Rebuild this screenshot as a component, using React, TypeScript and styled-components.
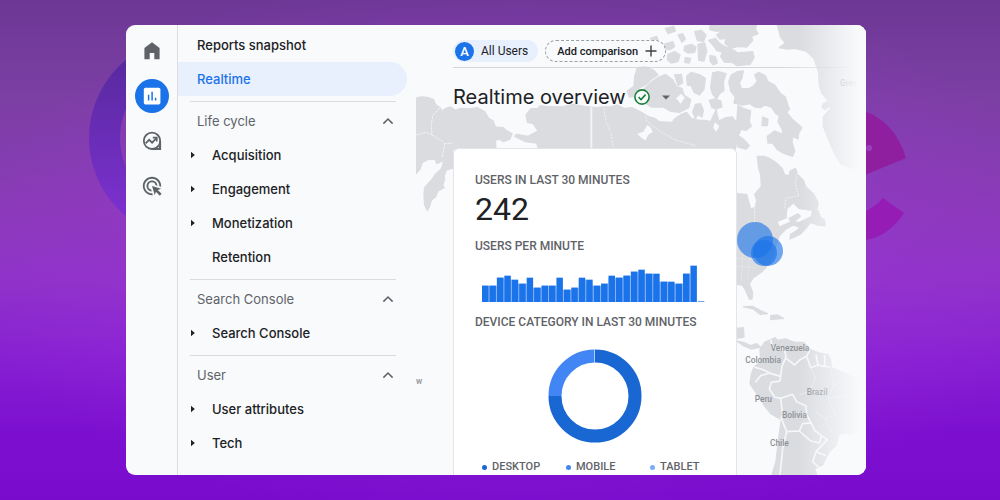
import React from "react";
import styled, { createGlobalStyle } from "styled-components";
import { MdAdsClick } from "react-icons/md";

const GlobalStyle = createGlobalStyle`
  *, *::before, *::after { box-sizing: border-box; }
  body { margin: 0; font-family: Inter, "Liberation Sans", sans-serif; color: #202124; }
  button { font: inherit; color: inherit; border: 0; background: none; padding: 0; margin: 0; cursor: pointer; }
  h1, h2, p, ul { margin: 0; padding: 0; font-weight: 400; }
  ul { list-style: none; }
  a { color: inherit; text-decoration: none; }
`;

const Stage = styled.div`
  position: relative;
  height: 100vh;
  display: flex;
  padding: 25px 13.4% 25px 12.6%;
  overflow: hidden;
  background:
    radial-gradient(ellipse 56% 56% at 52% 50%, rgba(165, 55, 225, 0.6), rgba(165, 55, 225, 0) 100%),
    linear-gradient(180deg, #6d3895 0%, #7c3fa4 20%, #8a3ab8 42%, #8f32c8 56%, #8822d2 70%, #7c10d0 86%, #790bcd 100%);
`;

const Backdrop = styled.svg`
  position: absolute;
  inset: 0;
  width: 100%;
  height: 100%;
`;

const Window = styled.div`
  position: relative;
  display: flex;
  flex: 1;
  min-width: 0;
  border-radius: 9px;
  overflow: hidden;
  background: #f8fafc;
`;

const Rail = styled.nav`
  flex: none;
  width: 52px;
  display: flex;
  flex-direction: column;
  align-items: center;
  gap: 11px;
  padding-top: 9px;
  border-right: 1px solid #dcdee1;
`;

const RailButton = styled.button<{ $active?: boolean }>`
  display: grid;
  place-items: center;
  width: 34px;
  height: 34px;
  border-radius: 50%;
  color: ${(p) => (p.$active ? "#fff" : "#5f6368")};
  background: ${(p) => (p.$active ? "#1a73e8" : "transparent")};
`;

const Nav = styled.nav`
  flex: none;
  width: 238px;
  padding-top: 3px;
`;

const NavLink = styled.a<{ $active?: boolean }>`
  display: flex;
  align-items: center;
  height: 34px;
  margin-right: 9px;
  padding-left: 19px;
  font-size: 13px;
  font-weight: 500;
  border-radius: 0 17px 17px 0;
  color: ${(p) => (p.$active ? "#1a73e8" : "#202124")};
  background: ${(p) => (p.$active ? "#e8f0fe" : "transparent")};
`;

const NavSection = styled.section`
  &::before {
    content: "";
    display: block;
    height: 1px;
    margin: 5px 20px 2px 12px;
    background: #dadce0;
  }
`;

const SectionButton = styled.button`
  display: flex;
  align-items: center;
  justify-content: space-between;
  width: 100%;
  height: 34px;
  padding: 0 22px 0 19px;
  font-size: 13px;
  color: #5f6368;
`;

const ItemButton = styled.button`
  display: grid;
  grid-template-columns: 21px auto;
  align-items: center;
  justify-content: start;
  width: 100%;
  height: 34px;
  padding-left: 13px;
  font-size: 13px;
  font-weight: 500;
  text-align: left;
`;

const ItemLabel = styled.span`
  grid-column: 2;
`;

const Main = styled.main`
  position: relative;
  flex: 1;
  min-width: 0;
  display: flex;
  flex-direction: column;
  padding: 15px 0 0 37px;
  overflow: hidden;
`;

const Map = styled.svg`
  position: absolute;
  inset: 0;
  width: 100%;
  height: 100%;
`;

const Header = styled.header`
  position: relative;
  display: flex;
  align-items: center;
  gap: 7px;
  padding-bottom: 5px;
  border-bottom: 1px solid;
  border-image: linear-gradient(90deg, #d5d7da 80%, #d5d7da00 97%) 1;
`;

const Chip = styled.button<{ $dashed?: boolean }>`
  display: flex;
  align-items: center;
  gap: 7px;
  height: 22px;
  padding: ${(p) => (p.$dashed ? "0 8px 0 11px" : "0 10px 0 2px")};
  border: ${(p) => (p.$dashed ? "1px dashed #9aa0a6" : "0")};
  border-radius: 11px;
  background: ${(p) => (p.$dashed ? "#f8fafc" : "#e8f0fe")};
  font-family: Roboto, "Liberation Sans", sans-serif;
  font-size: ${(p) => (p.$dashed ? "11px" : "12px")};
  font-weight: ${(p) => (p.$dashed ? 500 : 400)};
`;

const Avatar = styled.span`
  display: grid;
  place-items: center;
  width: 19px;
  height: 19px;
  border-radius: 50%;
  background: #1a73e8;
  color: #fff;
  font-size: 13px;
  font-weight: 500;
`;

const TitleRow = styled.div`
  position: relative;
  display: flex;
  align-items: center;
  gap: 8px;
  height: 58px;
  margin-bottom: 22px;
`;

const Title = styled.h1`
  font-size: 20px;
  line-height: 24px;
`;

const StatusButton = styled.button`
  display: flex;
  align-items: center;
  gap: 12px;
`;

const Card = styled.section`
  position: relative;
  flex: 1 0 auto;
  width: 284px;
  padding: 23px 22px 0 21px;
  border: 1px solid #e3e5e8;
  border-bottom: 0;
  border-radius: 6px 6px 0 0;
  background: #fff;
  font-family: Roboto, "Liberation Sans", sans-serif;
`;

const Label = styled.h2`
  font-size: 12px;
  line-height: 16px;
  font-weight: 500;
  white-space: nowrap;
  color: #5f6368;
`;

const BigNumber = styled.p`
  font-size: 32px;
  line-height: 42px;
  margin-bottom: 8px;
`;

const Bars = styled.svg`
  display: block;
  margin: 11px 0 12px 7px;
`;

const Donut = styled.svg`
  display: block;
  margin: 19px auto 16px;
`;

const Legend = styled.ul`
  display: grid;
  grid-template-columns: repeat(3, 84px);
  padding-left: 7px;
`;

const LegendItem = styled.li<{ $color: string }>`
  display: flex;
  align-items: center;
  gap: 5px;
  font-size: 11px;
  line-height: 16px;
  font-weight: 500;
  color: #5f6368;
  &::before {
    content: "";
    width: 5px;
    height: 5px;
    border-radius: 50%;
    background: ${(p) => p.$color};
  }
`;

const HomeIcon = () => (
  <svg width="16" height="18" viewBox="0 0 16 18" aria-hidden="true">
    <path d="M8 0.3 0.4 6V17.2H5.7V11H10.3V17.2H15.6V6Z" fill="currentColor" />
  </svg>
);

const ReportsIcon = () => (
  <svg width="18" height="18" viewBox="0 0 18 18" aria-hidden="true">
    <rect x="0.8" y="0.8" width="16.6" height="16.6" rx="1.6" fill="currentColor" />
    <path d="M5.6 7.7V13.4M9.1 4.8V13.4M12.6 10.7V13.4" stroke="#1a73e8" strokeWidth="1.5" />
  </svg>
);

const ExploreIcon = () => (
  <svg width="20" height="20" viewBox="0 0 20 20" fill="none" stroke="currentColor" strokeWidth="1.8" aria-hidden="true">
    <circle cx="10" cy="9.8" r="8.2" />
    <path d="M18.2 10V18.2H10" />
    <circle cx="16.4" cy="16.5" r="1.3" strokeWidth="1.2" />
    <path d="M3.6 12.3 7.2 8.8 10.1 11.6 14.2 7.3" />
    <path d="M10.8 6.6H14.8V10.5" strokeWidth="1.6" />
  </svg>
);

const ChevronUp = () => (
  <svg width="12" height="8" viewBox="0 0 12 8" fill="none" stroke="#5f6368" strokeWidth="1.5" aria-hidden="true">
    <path d="M1.4 6.6 6 2 10.6 6.6" />
  </svg>
);

const Arrow = () => (
  <svg width="5" height="8" viewBox="0 0 5 8" aria-hidden="true">
    <path d="M0 0.8 3.8 4 0 7.2Z" fill="#202124" />
  </svg>
);

const PlusIcon = () => (
  <svg width="12" height="12" viewBox="0 0 12 12" stroke="#3c4043" strokeWidth="1.4" aria-hidden="true">
    <path d="M6 0.5V11.5M0.5 6H11.5" />
  </svg>
);

const CheckIcon = () => (
  <svg width="16" height="16" viewBox="0 0 16 16" fill="none" stroke="#188038" strokeWidth="1.6" aria-hidden="true">
    <circle cx="8" cy="8" r="7.1" fill="#f8fafc" />
    <path d="M4.6 8.2 7 10.5 11.6 5.6" />
  </svg>
);

const Caret = () => (
  <svg width="8" height="5" viewBox="0 0 8 5" aria-hidden="true">
    <path d="M0 0.4H8L4 4.6Z" fill="#5f6368" />
  </svg>
);

const sections = [
  {
    title: "Life cycle",
    items: [
      { name: "Acquisition", opens: true },
      { name: "Engagement", opens: true },
      { name: "Monetization", opens: true },
      { name: "Retention", opens: false },
    ],
  },
  { title: "Search Console", items: [{ name: "Search Console", opens: true }] },
  {
    title: "User",
    items: [
      { name: "User attributes", opens: true },
      { name: "Tech", opens: true },
    ],
  },
];

const perMinute = [
  49, 49, 73, 79, 67, 55, 73, 43, 49, 49, 73, 37, 43, 73, 67, 49, 55, 79, 73, 79, 91, 97, 85, 85, 61, 61, 55, 85, 109, 3,
];

const legend = [
  { name: "DESKTOP", color: "#1967d2" },
  { name: "MOBILE", color: "#4285f4" },
  { name: "TABLET", color: "#7baaf7" },
];

const UsersChart = () => (
  <Bars width="223" height="37" viewBox="0 0 669 111" role="img" aria-label="Users per minute">
    {perMinute.map((h, i) => (
      <g key={i}>
        {i < 28 && (
          <rect x={i * 22.33} y={111 - Math.min(h, perMinute[i + 1])} width="22.4" height={Math.min(h, perMinute[i + 1])} fill="#8ab4f8" />
        )}
        <rect x={i * 22.33} y={111 - h} width="19.4" height={h} fill={i === 29 ? "#6ba4f2" : "#1a73e8"} />
      </g>
    ))}
  </Bars>
);

const DeviceChart = () => (
  <Donut width="94" height="94" viewBox="0 0 94 94" fill="none" strokeWidth="13" role="img" aria-label="Device category">
    <path d="M47 7A40 40 0 1 1 7 47" stroke="#1967d2" />
    <path d="M7 47A40 40 0 0 1 46.4 7" stroke="#4285f4" />
    <path d="M46.2 7H47" stroke="#aecbfa" />
  </Donut>
);

const WorldMap = () => (
  <Map viewBox="0 0 1350 1350" preserveAspectRatio="xMinYMin slice" aria-hidden="true">
    <defs>
      <linearGradient id="fade" x1="0" x2="1">
        <stop offset="0" stopColor="#f8fafc" stopOpacity="0" />
        <stop offset="0.9" stopColor="#f8fafc" />
      </linearGradient>
    </defs>
    <g fill="#dadce0" stroke="#dadce0" strokeWidth="4" strokeLinejoin="round">
      {/* Alaska and its peninsula */}
      <path d="M0 220Q26 210 52 224L60 240 72 248 78 258Q90 248 104 246L118 256 134 250 158 252 184 248 206 260 218 280 232 288 238 306 262 308 270 316 288 326 282 342 262 350 250 342 238 346 240 372H110V430L92 434 84 452 86 462 80 480 84 488 66 498 58 516 46 526 40 546 34 556 26 540 24 508 26 488 36 476 46 466 58 448 76 432 84 406 62 416 58 402 34 404 18 414 12 432 0 446Z" />
      {/* Northwest Canada */}
      <path d="M330 270 344 252 366 250 372 242 390 244 440 246 470 238 506 244 540 248 562 246 584 246 604 240 624 250 648 248 676 262 700 276 732 284 766 288 796 268 812 262 826 280 850 286 868 286 884 290 900 254 908 288 930 278 950 276 966 300 974 316 966 334 958 372H368L362 354 328 350 296 334 302 328 336 334 366 318 352 296 334 292Z" />
      {/* Banks and Victoria islands */}
      <path d="M664 128 690 126 714 136 726 150 704 164 690 178 668 190 654 214 640 216 634 198 654 184 656 156Z" />
      <path d="M700 176 726 158 748 148 770 164 782 186 798 190 804 210 824 224 818 248 790 262 762 258 742 246 706 246 684 232 672 216 680 196Z" />
      {/* Central archipelago */}
      <path d="M812 154 826 142 852 150 868 160 864 192 850 210 834 202 826 182 814 180Z M890 144 906 140 930 146 922 170 924 196 910 206 902 222 890 208 884 188Z M838 238 854 236 862 256 858 276 846 268 838 280 830 262Z M880 226 896 222 914 228 918 246 902 252 888 248Z M776 150 796 148 800 174 786 182Z" />
      <path d="M704 40 722 34 726 46 708 50Z M722 66 744 58 770 50 776 64 762 74 740 72Z M748 10 774 4 778 18 756 26Z M786 30 800 26 808 42 798 52Z M756 88 776 80 792 90 786 110 766 114 754 104Z M806 64 826 58 840 66 836 82 816 84 804 76Z M836 20 856 16 870 30 862 50 844 46Z M846 58 866 54 872 78 864 108 848 106Z M808 98 824 100 820 114 806 112Z M882 92 898 94 904 114 892 120 882 108Z" />
      <path d="M882 0H1022L1018 12 1026 26 1006 34 1010 46 992 66 966 64 944 70 926 54 932 40 912 42 902 30 918 18 898 18 882 14Z M878 46 898 40 910 54 928 66 950 74 966 84 1010 80 1014 98 1002 118 964 122 948 112 926 112 914 94 920 82 902 76 892 62Z" />
      {/* Baffin Island */}
      <path d="M938 170 946 150 964 140 982 138 978 158 970 174 976 190 998 192 1014 182 1024 168 1016 150 1028 142 1048 152 1056 170 1076 180 1092 204 1108 216 1114 236 1120 252 1112 262 1128 282 1158 308 1148 324 1146 342 1130 334 1128 352 1136 378 1130 394 1106 386 1084 374 1070 354 1056 354 1054 334 1076 318 1102 328 1098 312 1086 290 1090 274 1078 264 1066 246 1046 240 1034 248 1016 246 1002 236 980 240 954 234 958 216 944 198Z" />
      <path d="M966 242 986 252 1004 258 1000 290 1006 304 990 316 972 312 962 294Z M1040 276 1056 282 1054 302 1038 302Z M964 330 984 344 1000 362 990 372 966 366Z" />
      {/* Quebec and the Maritimes */}
      <path d="M1024 394 1044 394 1060 400 1082 414 1098 430 1106 450 1120 452 1122 438 1138 430 1146 450 1162 466 1170 486 1192 506 1206 532 1204 550 1180 556 1206 556 1214 578 1226 586 1228 602 1204 600 1184 592 1166 614 1152 628 1122 642 1124 628 1144 616 1152 606 1132 600 1110 612 1090 632 1060 720H960V506L992 508 998 530 1004 552 1018 548 1022 526 1016 508 1036 484 1034 448 1028 430Z" />
      {/* Eastern United States, Florida and the Caribbean */}
      <path d="M962 675 1052 725 1038 740 1012 758 1000 776 1010 804 1008 822 1000 822 986 790 978 780 962 778Z M982 845 1010 844 1032 856 1054 866 1032 868 1012 852Z M1064 872 1084 870 1102 880 1064 884Z M962 910 982 908 984 936 962 940Z M962 948 982 952 1004 962 1022 956 1034 966 1006 972 982 962Z" />
      {/* South America */}
      <path d="M1032 974 1046 952 1064 944 1078 938 1084 946 1108 942 1136 952 1162 952 1184 974 1210 984 1236 990 1244 1004 1246 1028 1280 1042 1306 1054 1350 1070V1226H1270L1260 1260 1236 1286 1220 1320 1196 1330 1202 1350H1068L1080 1310 1088 1240 1096 1184 1064 1166 1044 1140 1022 1106 1002 1076 1006 1048 1014 1026 1034 1010Z" />
      {/* Greenland */}
      <path d="M1084 0H1350V432L1310 430 1276 418 1256 386 1238 344 1222 304 1222 276 1244 250 1236 226 1218 206 1210 180 1208 142 1194 100 1170 78 1136 70 1114 72 1090 68 1108 54 1094 36Z" />
    </g>
    <g fill="#f8fafc">
      <path d="M664 326 682 320 694 300 704 308 710 322 698 328 688 346 676 338Z" />
      <path d="M704 268 734 272 750 270 774 280 768 290 730 288Z M780 220 796 206 806 218 794 236Z M896 292 910 304 900 320 892 308Z" />
      <path d="M1114 552 1132 536 1148 552 1188 558 1184 574 1150 590 1126 588 1090 604 1086 590 1112 580Z" />
    </g>
    <g fill="#dadce0">
      <path d="M1116 580 1146 564 1156 574 1128 598Z M1196 562 1210 574 1228 602 1200 592Z" />
      <path d="M1220 234 1236 228 1242 246 1226 256 1216 248Z" />
    </g>
    <g fill="none" stroke="#f1f3f5" strokeWidth="3" strokeLinejoin="round">
      <path d="M526 246V372" strokeWidth="6" />
      <path d="M564 250 570 290 584 320 592 366M688 254 692 288 730 318 780 346 840 362" strokeDasharray="6 4" />
      <path d="M0 330 30 322 48 330 46 300 50 272 72 248M48 330 76 346 86 356 110 354M86 356 78 400" strokeDasharray="8 3" />
      <path d="M1144 444 1138 480 1148 512M1148 512 1110 520 1106 550M1016 550V600" strokeDasharray="5 4" />
    </g>
    <g fill="none" stroke="#f5f7f9" strokeWidth="5" strokeLinejoin="round">
      <path d="M1064 944 1070 968 1106 974 1110 996 1098 1024 1092 1068 1066 1072 1060 1092 1076 1116 1094 1120 1100 1170 1094 1184" />
      <path d="M1014 1026 1042 1034 1066 1046 1094 1054M1018 1072 1034 1052 1060 1044" />
      <path d="M1110 1000 1136 1020 1152 1004 1172 994 1182 974M1172 994 1184 1028 1206 1020 1226 1024 1244 1026M1206 1020 1200 988M1226 1024 1226 990" />
      <path d="M1094 1120 1130 1108 1142 1130 1170 1142 1172 1168 1184 1192M1096 1180 1112 1220 1150 1218 1160 1196 1186 1194 1196 1216 1216 1232 1210 1254 1184 1248 1150 1218M1112 1220 1100 1270 1092 1350" />
      <path d="M1216 1232 1234 1244 1200 1280 1190 1310 1214 1332M1200 1280 1230 1292" />
    </g>
    <g fill="none" stroke="#e8eaed" strokeWidth="3">
      <path d="M1184 1028 1198 1060 1180 1100 1150 1110M1244 1030 1254 1080 1236 1120 1260 1170 1226 1180 1198 1160M1254 1080 1300 1060M1236 1120 1290 1110M1226 1180 1250 1226" />
      <path d="M962 700 1030 706M962 724 1026 728M980 680 976 770M1000 685 996 762" strokeDasharray="4 4" />
    </g>
    <g fill="#8d9196" fontFamily="Roboto, 'Liberation Sans', sans-serif" fontSize="25" fontWeight="500">
      <text x="1064" y="979">Venezuela</text>
      <text x="988" y="1013">Colombia</text>
      <text x="1172" y="1110">Brazil</text>
      <text x="1016" y="1130">Peru</text>
      <text x="1098" y="1178">Bolivia</text>
      <text x="1062" y="1264">Chile</text>
      <text x="1272" y="182">Gree</text>
      <text x="0" y="1078">w</text>
    </g>
    <rect x="1150" y="0" width="200" height="1350" fill="url(#fade)" />
    <g fill="#1a73e8" fillOpacity="0.62">
      <circle cx="1017" cy="645" r="54" />
      <circle cx="1056" cy="678" r="45" />
      <circle cx="1044" cy="684" r="39" />
    </g>
  </Map>
);

export default function App() {
  return (
    <>
      <GlobalStyle />
      <Stage>
        <Backdrop viewBox="0 0 1000 500" preserveAspectRatio="xMidYMin slice" aria-hidden="true">
          <defs>
            <linearGradient id="ring" x1="0" x2="0" y1="0" y2="1">
              <stop offset="0.1" stopColor="#5a2aa2" />
              <stop offset="0.9" stopColor="#7a30cc" />
            </linearGradient>
          </defs>
          <circle cx="190" cy="138" r="85.5" fill="none" stroke="url(#ring)" strokeWidth="31" />
          <path d="M860 110Q894 119 906 158L860 177Z" fill="#8f1f9f" />
          <path d="M860 214Q874 208 883 198L904 213Q888 238 860 241Z" fill="#951cb4" />
          <circle cx="869" cy="148" r="3" fill="#9a3fbf" />
        </Backdrop>
        <Window>
          <Rail aria-label="Product areas">
            <RailButton aria-label="Home"><HomeIcon /></RailButton>
            <RailButton $active aria-label="Reports"><ReportsIcon /></RailButton>
            <RailButton aria-label="Explore"><ExploreIcon /></RailButton>
            <RailButton aria-label="Advertising"><MdAdsClick size={22} /></RailButton>
          </Rail>
          <Nav aria-label="Reports">
            <NavLink href="#snapshot">Reports snapshot</NavLink>
            <NavLink href="#realtime" $active>Realtime</NavLink>
            {sections.map((s) => (
              <NavSection key={s.title}>
                <SectionButton aria-expanded="true">
                  {s.title}
                  <ChevronUp />
                </SectionButton>
                {s.items.map((item) => (
                  <ItemButton key={item.name}>
                    {item.opens && <Arrow />}
                    <ItemLabel>{item.name}</ItemLabel>
                  </ItemButton>
                ))}
              </NavSection>
            ))}
          </Nav>
          <Main>
            <WorldMap />
            <Header>
              <Chip><Avatar>A</Avatar>All Users</Chip>
              <Chip $dashed>Add comparison<PlusIcon /></Chip>
            </Header>
            <TitleRow>
              <Title>Realtime overview</Title>
              <StatusButton aria-label="Data quality"><CheckIcon /><Caret /></StatusButton>
            </TitleRow>
            <Card>
              <Label>USERS IN LAST 30 MINUTES</Label>
              <BigNumber>242</BigNumber>
              <Label>USERS PER MINUTE</Label>
              <UsersChart />
              <Label>DEVICE CATEGORY IN LAST 30 MINUTES</Label>
              <DeviceChart />
              <Legend>
                {legend.map((l) => (
                  <LegendItem key={l.name} $color={l.color}>{l.name}</LegendItem>
                ))}
              </Legend>
            </Card>
          </Main>
        </Window>
      </Stage>
    </>
  );
}
